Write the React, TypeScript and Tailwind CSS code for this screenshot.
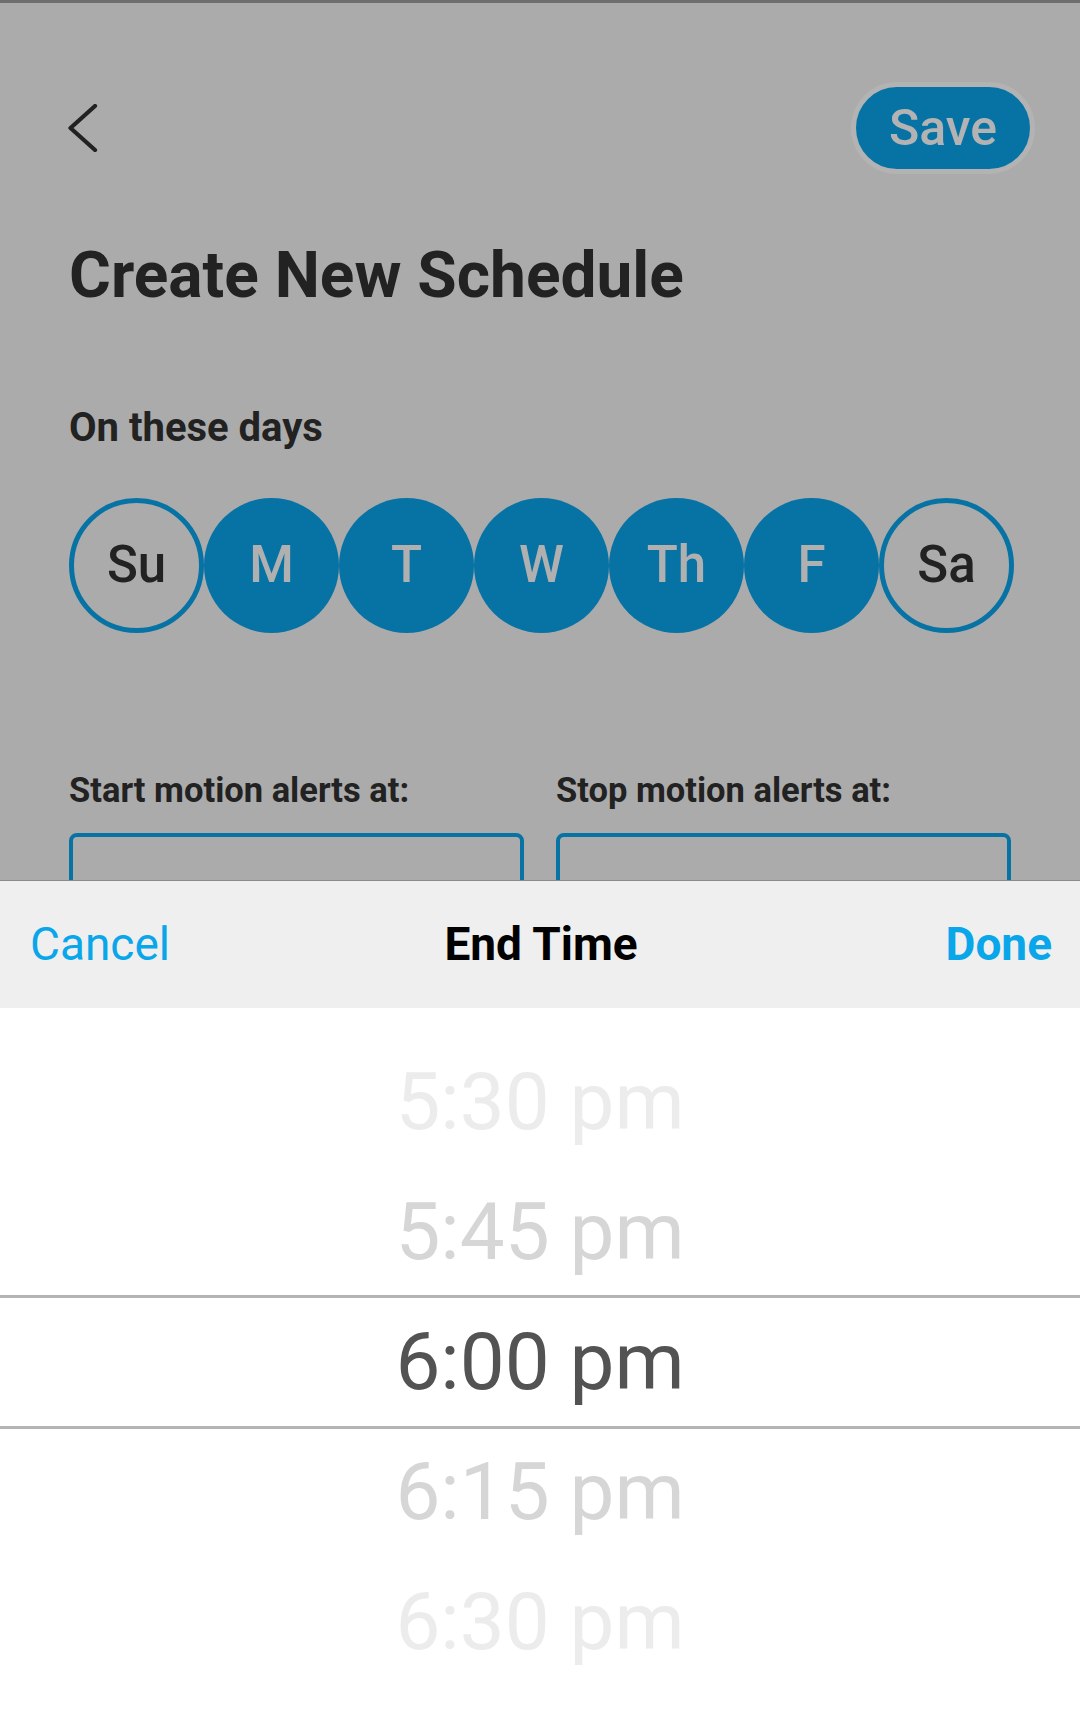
import { useState } from "react";

const days = [
  { label: "Su", on: false },
  { label: "M", on: true },
  { label: "T", on: true },
  { label: "W", on: true },
  { label: "Th", on: true },
  { label: "F", on: true },
  { label: "Sa", on: false },
];

const times = [
  { label: "5:30 pm", tone: "text-[#ececec]" },
  { label: "5:45 pm", tone: "text-[#d6d6d6]" },
  { label: "6:00 pm", tone: "text-[#535353]" },
  { label: "6:15 pm", tone: "text-[#d6d6d6]" },
  { label: "6:30 pm", tone: "text-[#ececec]" },
];

const BackIcon = () => (
  <svg width="30" height="48" viewBox="0 0 30 48" fill="none">
    <path
      d="M27 2 L2.5 24 L27 46"
      stroke="#222222"
      strokeWidth="4.2"
      strokeLinecap="round"
      strokeLinejoin="round"
    />
  </svg>
);

const App = () => {
  const [selected] = useState(2);

  return (
    <div className="relative w-[1080px] h-[1716px] overflow-hidden bg-[#ababab] font-['Roboto',sans-serif]">
      <div className="h-[3px] bg-[#6e6e6e]" />

      {/* page behind the sheet, dimmed */}
      <div className="mt-[79px] h-[92px] flex items-center justify-between pl-[68px] pr-[45px]">
        <BackIcon />
        <button className="w-[184px] h-[92px] rounded-full border-[5px] border-[#b3b3b3] bg-[#0773a5] text-[#b3b3b3] text-[50px] font-medium leading-none">
          Save
        </button>
      </div>

      <div className="px-[69px]">
        <h1 className="mt-[70px] text-[64px] leading-[63px] font-bold text-[#222222]">
          Create New Schedule
        </h1>

        <p className="mt-[101px] text-[40px] leading-[39px] font-bold text-[#222222]">
          On these days
        </p>

        <div className="mt-[51px] flex">
          {days.map((d) => (
            <div
              key={d.label}
              className={
                d.on
                  ? "w-[135px] h-[135px] shrink-0 rounded-full bg-[#0773a5] text-[#b0b0b0] flex items-center justify-center text-[51px] font-medium"
                  : "w-[135px] h-[135px] shrink-0 rounded-full border-[5px] border-[#0773a5] text-[#222222] flex items-center justify-center text-[51px] font-medium"
              }
            >
              {d.label}
            </div>
          ))}
        </div>

        <div className="mt-[141px] grid grid-cols-[455px_455px] gap-x-[32px]">
          <p className="text-[34.5px] leading-[32px] font-bold text-[#222222] whitespace-nowrap">
            Start motion alerts at:
          </p>
          <p className="text-[34.5px] leading-[32px] font-bold text-[#222222] whitespace-nowrap">
            Stop motion alerts at:
          </p>
          <div className="mt-[27px] h-[120px] rounded-[8px] border-[4px] border-[#0773a5]" />
          <div className="mt-[27px] h-[120px] rounded-[8px] border-[4px] border-[#0773a5]" />
        </div>
      </div>

      {/* bottom sheet */}
      <div className="absolute inset-x-0 bottom-0 h-[836px] bg-white">
        <div className="h-[128px] border-t border-[#8a8a8a] bg-[#efefef] grid grid-cols-[1fr_auto_1fr] items-center pl-[30px] pr-[28px]">
          <span className="justify-self-start text-[46px] text-[#0aa6ea]">Cancel</span>
          <span className="text-[46px] font-bold text-black">End Time</span>
          <span className="justify-self-end text-[46px] font-bold text-[#0aa6ea]">Done</span>
        </div>

        <div className="pt-[29px]">
          {times.map((t, i) =>
            i === selected ? (
              <div
                key={t.label}
                className="h-[134px] -my-[2px] border-y-[3px] border-[#b4b4b4] flex items-center justify-center"
              >
                <span className={`text-[80px] leading-none ${t.tone}`}>{t.label}</span>
              </div>
            ) : (
              <div key={t.label} className="h-[130px] flex items-center justify-center">
                <span className={`text-[80px] leading-none ${t.tone}`}>{t.label}</span>
              </div>
            )
          )}
        </div>
      </div>
    </div>
  );
};

export default App;
